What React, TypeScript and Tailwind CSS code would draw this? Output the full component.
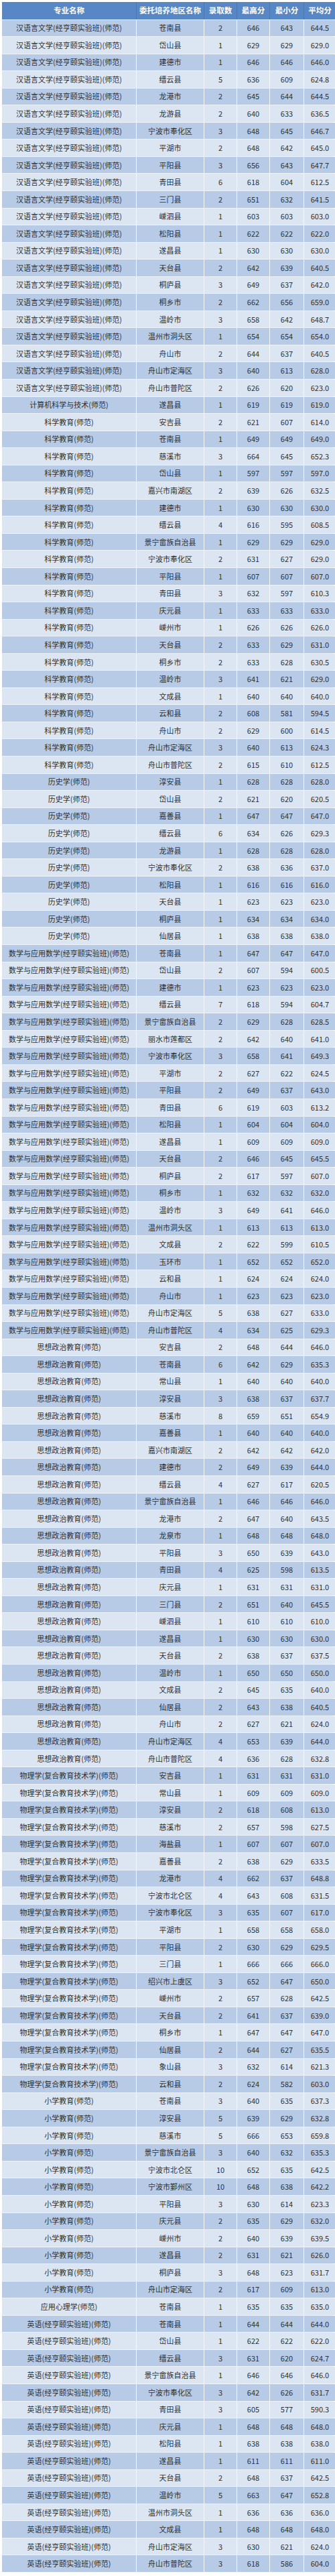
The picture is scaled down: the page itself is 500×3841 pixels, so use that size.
const HY = '汉语言文学(经亨颐实验班)(师范)';
const KX = '科学教育(师范)';
const LS = '历史学(师范)';
const SX = '数学与应用数学(经亨颐实验班)(师范)';
const SZ = '思想政治教育(师范)';
const WL = '物理学(复合教育技术学)(师范)';
const XX = '小学教育(师范)';
const YY = '英语(经亨颐实验班)(师范)';

// [专业, 地区, 录取数, 最高, 最低, 平均]
const rows: [string, string, number, number, number, string][] = [
  [HY, '苍南县', 2, 646, 643, '644.5'],
  [HY, '岱山县', 1, 629, 629, '629.0'],
  [HY, '建德市', 1, 646, 646, '646.0'],
  [HY, '缙云县', 5, 636, 609, '624.8'],
  [HY, '龙港市', 2, 645, 644, '644.5'],
  [HY, '龙游县', 2, 640, 633, '636.5'],
  [HY, '宁波市奉化区', 3, 648, 645, '646.7'],
  [HY, '平湖市', 2, 648, 642, '645.0'],
  [HY, '平阳县', 3, 656, 643, '647.7'],
  [HY, '青田县', 6, 618, 604, '612.5'],
  [HY, '三门县', 2, 651, 632, '641.5'],
  [HY, '嵊泗县', 1, 603, 603, '603.0'],
  [HY, '松阳县', 1, 622, 622, '622.0'],
  [HY, '遂昌县', 1, 630, 630, '630.0'],
  [HY, '天台县', 2, 642, 639, '640.5'],
  [HY, '桐庐县', 3, 649, 637, '642.0'],
  [HY, '桐乡市', 2, 662, 656, '659.0'],
  [HY, '温岭市', 3, 658, 642, '648.7'],
  [HY, '温州市洞头区', 1, 654, 654, '654.0'],
  [HY, '舟山市', 2, 644, 637, '640.5'],
  [HY, '舟山市定海区', 3, 640, 613, '628.0'],
  [HY, '舟山市普陀区', 2, 626, 620, '623.0'],
  ['计算机科学与技术(师范)', '遂昌县', 1, 619, 619, '619.0'],
  [KX, '安吉县', 2, 621, 607, '614.0'],
  [KX, '苍南县', 1, 649, 649, '649.0'],
  [KX, '慈溪市', 3, 664, 645, '652.3'],
  [KX, '岱山县', 1, 597, 597, '597.0'],
  [KX, '嘉兴市南湖区', 2, 639, 626, '632.5'],
  [KX, '建德市', 1, 630, 630, '630.0'],
  [KX, '缙云县', 4, 616, 595, '608.5'],
  [KX, '景宁畲族自治县', 1, 629, 629, '629.0'],
  [KX, '宁波市奉化区', 2, 631, 627, '629.0'],
  [KX, '平阳县', 1, 607, 607, '607.0'],
  [KX, '青田县', 3, 632, 597, '610.3'],
  [KX, '庆元县', 1, 633, 633, '633.0'],
  [KX, '嵊州市', 1, 626, 626, '626.0'],
  [KX, '天台县', 2, 633, 629, '631.0'],
  [KX, '桐乡市', 2, 633, 628, '630.5'],
  [KX, '温岭市', 3, 641, 621, '629.0'],
  [KX, '文成县', 1, 640, 640, '640.0'],
  [KX, '云和县', 2, 608, 581, '594.5'],
  [KX, '舟山市', 2, 629, 600, '614.5'],
  [KX, '舟山市定海区', 3, 640, 613, '624.3'],
  [KX, '舟山市普陀区', 2, 615, 610, '612.5'],
  [LS, '淳安县', 1, 628, 628, '628.0'],
  [LS, '岱山县', 2, 621, 620, '620.5'],
  [LS, '嘉善县', 1, 647, 647, '647.0'],
  [LS, '缙云县', 6, 634, 626, '629.3'],
  [LS, '龙游县', 1, 628, 628, '628.0'],
  [LS, '宁波市奉化区', 2, 638, 636, '637.0'],
  [LS, '松阳县', 1, 616, 616, '616.0'],
  [LS, '天台县', 1, 623, 623, '623.0'],
  [LS, '桐庐县', 1, 634, 634, '634.0'],
  [LS, '仙居县', 1, 638, 638, '638.0'],
  [SX, '苍南县', 1, 647, 647, '647.0'],
  [SX, '岱山县', 2, 607, 594, '600.5'],
  [SX, '建德市', 1, 623, 623, '623.0'],
  [SX, '缙云县', 7, 618, 594, '604.7'],
  [SX, '景宁畲族自治县', 2, 629, 628, '628.5'],
  [SX, '丽水市莲都区', 2, 642, 640, '641.0'],
  [SX, '宁波市奉化区', 3, 658, 641, '649.3'],
  [SX, '平湖市', 2, 627, 622, '624.5'],
  [SX, '平阳县', 2, 649, 637, '643.0'],
  [SX, '青田县', 6, 619, 603, '613.2'],
  [SX, '松阳县', 1, 604, 604, '604.0'],
  [SX, '遂昌县', 1, 609, 609, '609.0'],
  [SX, '天台县', 2, 646, 645, '645.5'],
  [SX, '桐庐县', 2, 617, 597, '607.0'],
  [SX, '桐乡市', 1, 632, 632, '632.0'],
  [SX, '温岭市', 3, 649, 641, '646.0'],
  [SX, '温州市洞头区', 1, 613, 613, '613.0'],
  [SX, '文成县', 2, 622, 599, '610.5'],
  [SX, '玉环市', 1, 652, 652, '652.0'],
  [SX, '云和县', 1, 624, 624, '624.0'],
  [SX, '舟山市', 1, 623, 623, '623.0'],
  [SX, '舟山市定海区', 5, 638, 627, '633.0'],
  [SX, '舟山市普陀区', 4, 634, 625, '629.3'],
  [SZ, '安吉县', 2, 648, 644, '646.0'],
  [SZ, '苍南县', 6, 642, 629, '635.3'],
  [SZ, '常山县', 1, 640, 640, '640.0'],
  [SZ, '淳安县', 3, 638, 637, '637.7'],
  [SZ, '慈溪市', 8, 659, 651, '654.9'],
  [SZ, '嘉善县', 1, 640, 640, '640.0'],
  [SZ, '嘉兴市南湖区', 2, 642, 642, '642.0'],
  [SZ, '建德市', 2, 649, 639, '644.0'],
  [SZ, '缙云县', 4, 627, 617, '620.5'],
  [SZ, '景宁畲族自治县', 1, 646, 646, '646.0'],
  [SZ, '龙港市', 2, 647, 640, '643.5'],
  [SZ, '龙泉市', 1, 648, 648, '648.0'],
  [SZ, '平阳县', 3, 650, 639, '643.0'],
  [SZ, '青田县', 4, 625, 598, '613.5'],
  [SZ, '庆元县', 1, 631, 631, '631.0'],
  [SZ, '三门县', 2, 651, 640, '645.5'],
  [SZ, '嵊泗县', 1, 610, 610, '610.0'],
  [SZ, '遂昌县', 1, 630, 630, '630.0'],
  [SZ, '天台县', 2, 638, 637, '637.5'],
  [SZ, '温岭市', 1, 650, 650, '650.0'],
  [SZ, '文成县', 2, 645, 635, '640.0'],
  [SZ, '仙居县', 2, 643, 638, '640.5'],
  [SZ, '舟山市', 2, 627, 621, '624.0'],
  [SZ, '舟山市定海区', 4, 653, 639, '644.0'],
  [SZ, '舟山市普陀区', 4, 636, 628, '632.8'],
  [WL, '安吉县', 1, 631, 631, '631.0'],
  [WL, '常山县', 1, 609, 609, '609.0'],
  [WL, '淳安县', 2, 618, 608, '613.0'],
  [WL, '慈溪市', 2, 657, 598, '627.5'],
  [WL, '海盐县', 1, 607, 607, '607.0'],
  [WL, '嘉善县', 2, 638, 629, '633.5'],
  [WL, '龙港市', 4, 662, 637, '648.8'],
  [WL, '宁波市北仑区', 4, 643, 608, '631.5'],
  [WL, '宁波市奉化区', 3, 635, 607, '617.0'],
  [WL, '平湖市', 1, 658, 658, '658.0'],
  [WL, '平阳县', 2, 630, 629, '629.5'],
  [WL, '三门县', 1, 666, 666, '666.0'],
  [WL, '绍兴市上虞区', 3, 652, 647, '650.0'],
  [WL, '嵊州市', 2, 657, 628, '642.5'],
  [WL, '天台县', 2, 641, 637, '639.0'],
  [WL, '桐乡市', 1, 647, 647, '647.0'],
  [WL, '仙居县', 2, 644, 627, '635.5'],
  [WL, '象山县', 3, 632, 614, '621.3'],
  [WL, '云和县', 2, 624, 582, '603.0'],
  [XX, '苍南县', 3, 640, 635, '637.3'],
  [XX, '淳安县', 5, 639, 629, '632.8'],
  [XX, '慈溪市', 5, 666, 653, '659.8'],
  [XX, '景宁畲族自治县', 3, 640, 632, '635.3'],
  [XX, '宁波市北仑区', 10, 652, 635, '642.5'],
  [XX, '宁波市鄞州区', 10, 648, 638, '642.2'],
  [XX, '平阳县', 3, 630, 614, '623.3'],
  [XX, '庆元县', 2, 635, 629, '632.0'],
  [XX, '嵊州市', 2, 640, 639, '639.5'],
  [XX, '遂昌县', 2, 631, 621, '626.0'],
  [XX, '桐庐县', 3, 648, 623, '631.7'],
  [XX, '舟山市定海区', 2, 617, 609, '613.0'],
  ['应用心理学(师范)', '苍南县', 1, 635, 635, '635.0'],
  [YY, '苍南县', 1, 644, 644, '644.0'],
  [YY, '岱山县', 1, 622, 622, '622.0'],
  [YY, '缙云县', 3, 631, 620, '624.7'],
  [YY, '景宁畲族自治县', 1, 646, 646, '646.0'],
  [YY, '宁波市奉化区', 3, 642, 626, '631.7'],
  [YY, '青田县', 3, 605, 577, '590.3'],
  [YY, '庆元县', 1, 648, 648, '648.0'],
  [YY, '松阳县', 1, 638, 638, '638.0'],
  [YY, '遂昌县', 1, 611, 611, '611.0'],
  [YY, '天台县', 2, 648, 637, '642.5'],
  [YY, '温岭市', 5, 663, 647, '652.8'],
  [YY, '温州市洞头区', 1, 636, 636, '636.0'],
  [YY, '文成县', 1, 648, 648, '648.0'],
  [YY, '舟山市定海区', 3, 630, 621, '624.0'],
  [YY, '舟山市普陀区', 3, 618, 586, '604.0'],
];

const headers = ['专业名称', '委托培养地区名称', '录取数', '最高分', '最小分', '平均分'];

export default function App() {
  return (
    <div
      className="w-[500px] bg-white px-[3px] pt-[3px] pb-[3px]"
      style={{ fontFamily: '"Noto Sans CJK SC", "Noto Sans", sans-serif' }}
    >
      {/* Header */}
      <div className="grid h-[25.5px] grid-cols-[200px_100px_48px_48px_50px_47px] gap-x-px bg-[#4a78b5]">
        {headers.map((h) => (
          <div
            key={h}
            className="flex items-center justify-center bg-[#5787c4] text-[11.5px] font-bold text-white"
          >
            {h}
          </div>
        ))}
      </div>

      {/* Rows */}
      {rows.map((r, i) => {
        const cell = i % 2 === 0 ? 'bg-[#b7cbe6]' : 'bg-[#dce6f2]';
        return (
          <div
            key={i}
            className="grid h-[25.56px] grid-cols-[200px_100px_48px_48px_50px_47px] gap-x-px border-t border-[#eef3f9] bg-[#f4f7fb]"
          >
            {r.map((v, j) => (
              <div
                key={j}
                className={`flex items-center justify-center text-[11px] leading-none text-[#2f2f2f] ${cell}`}
              >
                {v}
              </div>
            ))}
          </div>
        );
      })}
    </div>
  );
}
